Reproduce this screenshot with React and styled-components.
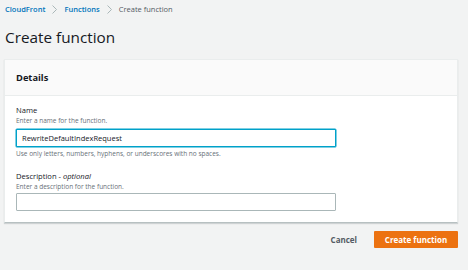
import React from "react";
import styled, { createGlobalStyle } from "styled-components";

const Global = createGlobalStyle`
  html, body { margin: 0; padding: 0; background: #f2f3f3; }
  body { font-family: "Open Sans", "Noto Sans", Arial, sans-serif; color: #16191f; }
  * { box-sizing: border-box; }
`;

const Page = styled.div`
  width: 468px;
  height: 270px;
  padding: 0 10px 0 4px;
  background: #f2f3f3;
  overflow: hidden;
`;

const Crumbs = styled.nav`
  display: flex;
  align-items: center;
  height: 18px;
  padding-left: 1px;
  font-size: 7.5px;
  gap: 7px;
`;

const CrumbLink = styled.span`
  color: #0073bb;
  font-weight: 600;
`;

const CrumbCurrent = styled.span`
  color: #545b64;
`;

const Chevron = styled.svg`
  width: 5px;
  height: 9px;
`;

const Title = styled.h1`
  margin: 7px 0 10px 1px;
  font-size: 15.3px;
  line-height: 24px;
  font-weight: 400;
  color: #16191f;
`;

const Card = styled.section`
  background: #fff;
  border: 1px solid #eaeded;
  border-bottom-color: #b7c0c1;
  box-shadow: 0 1px 1px rgba(0, 28, 36, 0.15);
`;

const CardHeader = styled.div`
  height: 36px;
  display: flex;
  align-items: center;
  padding: 0 11px;
  background: #fafafa;
  border-bottom: 1px solid #eaeded;
  font-size: 9.3px;
  font-weight: 700;
`;

const CardBody = styled.div`
  padding: 8px 11px 11px;
  display: flex;
  flex-direction: column;
`;

const Field = styled.div`
  display: flex;
  flex-direction: column;
  margin-top: ${(p) => p.$gap || 0}px;
`;

const Label = styled.label`
  font-size: 7.6px;
  line-height: 12px;
  color: #16191f;
  em { font-style: italic; }
`;

const Hint = styled.div`
  font-size: 6.5px;
  line-height: 10px;
  color: #687078;
  margin-top: ${(p) => p.$top || 0}px;
`;

const Input = styled.div`
  width: 320px;
  height: 18px;
  margin-top: ${(p) => p.$top || 0}px;
  display: flex;
  align-items: center;
  padding: 0 5px;
  border: 1px solid ${(p) => (p.$focus ? "#00a1c9" : "#aab7b8")};
  box-shadow: ${(p) => (p.$focus ? "0 0 0 0.5px #00a1c9" : "none")};
  border-radius: 1px;
  background: #fff;
  font-size: 7.5px;
  color: #16191f;
`;

const Actions = styled.div`
  display: flex;
  justify-content: flex-end;
  align-items: center;
  margin-top: 8px;
  gap: 17px;
`;

const Button = styled.button`
  height: 17px;
  padding: 0;
  border: none;
  border-radius: 1px;
  white-space: nowrap;
  font-family: inherit;
  font-size: 8px;
  font-weight: 700;
  background: ${(p) => (p.$primary ? "#ec7211" : "transparent")};
  color: ${(p) => (p.$primary ? "#fff" : "#545b64")};
  width: ${(p) => (p.$primary ? "84px" : "auto")};
`;

const Sep = () => (
  <Chevron viewBox="0 0 5 9">
    <path d="M0.5 0.5 L4.5 4.5 L0.5 8.5" fill="none" stroke="#aab7b8" strokeWidth="1" />
  </Chevron>
);

export default function App() {
  return (
    <>
      <Global />
      <Page>
        <Crumbs>
          <CrumbLink>CloudFront</CrumbLink>
          <Sep />
          <CrumbLink>Functions</CrumbLink>
          <Sep />
          <CrumbCurrent>Create function</CrumbCurrent>
        </Crumbs>
        <Title>Create function</Title>
        <Card>
          <CardHeader>Details</CardHeader>
          <CardBody>
            <Field>
              <Label>Name</Label>
              <Hint>Enter a name for the function.</Hint>
              <Input $focus $top={3}>RewriteDefaultIndexRequest</Input>
              <Hint $top={2}>Use only letters, numbers, hyphens, or underscores with no spaces.</Hint>
            </Field>
            <Field $gap={11}>
              <Label>
                Description - <em>optional</em>
              </Label>
              <Hint>Enter a description for the function.</Hint>
              <Input $top={1} />
            </Field>
          </CardBody>
        </Card>
        <Actions>
          <Button>Cancel</Button>
          <Button $primary>Create function</Button>
        </Actions>
      </Page>
    </>
  );
}
